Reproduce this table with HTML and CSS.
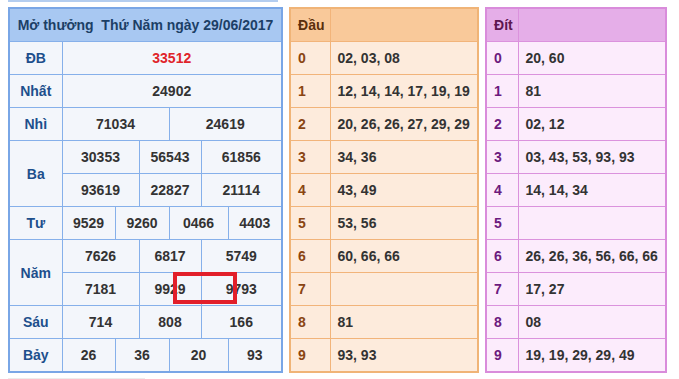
FILE: index.html
```html
<!DOCTYPE html>
<html lang="vi">
<head>
<meta charset="utf-8">
<title>Kết quả xổ số</title>
<link rel="stylesheet" href="styles.css">
</head>
<body>
<div class="prev"></div>
<div class="row">
  <div class="kq-wrap">
    <table class="kq">
      <colgroup>
        <col class="c-label"><col class="c1"><col class="c2"><col class="c3"><col class="c4"><col class="c5"><col class="c6">
      </colgroup>
      <tr class="head"><th colspan="7">Mở thưởng&nbsp; Thứ Năm ngày&nbsp;29/06/2017</th></tr>
      <tr><td class="lbl">ĐB</td><td colspan="6" class="db">33512</td></tr>
      <tr><td class="lbl">Nhất</td><td colspan="6">24902</td></tr>
      <tr><td class="lbl">Nhì</td><td colspan="3">71034</td><td colspan="3">24619</td></tr>
      <tr><td class="lbl" rowspan="2">Ba</td><td colspan="2">30353</td><td colspan="2">56543</td><td colspan="2">61856</td></tr>
      <tr><td colspan="2">93619</td><td colspan="2">22827</td><td colspan="2">21114</td></tr>
      <tr><td class="lbl">Tư</td><td>9529</td><td colspan="2">9260</td><td colspan="2">0466</td><td>4403</td></tr>
      <tr><td class="lbl" rowspan="2">Năm</td><td colspan="2">7626</td><td colspan="2">6817</td><td colspan="2">5749</td></tr>
      <tr><td colspan="2">7181</td><td colspan="2">9929</td><td colspan="2">9793</td></tr>
      <tr><td class="lbl">Sáu</td><td colspan="2">714</td><td colspan="2">808</td><td colspan="2">166</td></tr>
      <tr><td class="lbl">Bảy</td><td>26</td><td colspan="2">36</td><td colspan="2">20</td><td>93</td></tr>
    </table>
    <div class="mark"></div>
  </div>

  <table class="lt dau">
    <colgroup><col class="k"><col></colgroup>
    <tr class="head"><th>Đầu</th><th></th></tr>
    <tr><td class="d">0</td><td>02, 03, 08</td></tr>
    <tr><td class="d">1</td><td>12, 14, 14, 17, 19, 19</td></tr>
    <tr><td class="d">2</td><td>20, 26, 26, 27, 29, 29</td></tr>
    <tr><td class="d">3</td><td>34, 36</td></tr>
    <tr><td class="d">4</td><td>43, 49</td></tr>
    <tr><td class="d">5</td><td>53, 56</td></tr>
    <tr><td class="d">6</td><td>60, 66, 66</td></tr>
    <tr><td class="d">7</td><td></td></tr>
    <tr><td class="d">8</td><td>81</td></tr>
    <tr><td class="d">9</td><td>93, 93</td></tr>
  </table>

  <table class="lt dit">
    <colgroup><col class="k"><col></colgroup>
    <tr class="head"><th>Đít</th><th></th></tr>
    <tr><td class="d">0</td><td>20, 60</td></tr>
    <tr><td class="d">1</td><td>81</td></tr>
    <tr><td class="d">2</td><td>02, 12</td></tr>
    <tr><td class="d">3</td><td>03, 43, 53, 93, 93</td></tr>
    <tr><td class="d">4</td><td>14, 14, 34</td></tr>
    <tr><td class="d">5</td><td></td></tr>
    <tr><td class="d">6</td><td>26, 26, 36, 56, 66, 66</td></tr>
    <tr><td class="d">7</td><td>17, 27</td></tr>
    <tr><td class="d">8</td><td>08</td></tr>
    <tr><td class="d">9</td><td>19, 19, 29, 29, 49</td></tr>
  </table>
</div>
<div class="next"></div>
</body>
</html>
```

FILE: styles.css
```css
html, body {
  margin: 0;
  padding: 0;
  background: #ffffff;
}
body {
  font-family: "Liberation Sans", Arial, sans-serif;
  font-size: 14px;
  font-weight: bold;
  color: #333333;
  overflow: hidden;
}
.prev {
  height: 2px;
  width: 270px;
  margin-left: 8px;
  background: #b3cdf0;
}
.row {
  display: flex;
  align-items: flex-start;
  gap: 6px;
  margin: 5px 0 0 8px;
}
.kq-wrap {
  position: relative;
}
table {
  border-collapse: collapse;
  table-layout: fixed;
}
td, th {
  height: 32px;
  padding: 0;
  font-weight: bold;
  white-space: nowrap;
}
tr {
  height: 33px;
}

/* Left results table */
.kq {
  width: 273px;
  border: 2px solid #79a6e6;
  background: #f3f6fb;
}
.kq td, .kq th {
  border: 1px solid #86b0ea;
  text-align: center;
}
.kq .c-label { width: 53px; }
.kq .c1 { width: 53px; }
.kq .c2 { width: 24px; }
.kq .c3 { width: 30px; }
.kq .c4 { width: 32px; }
.kq .c5 { width: 27px; }
.kq .c6 { width: 54px; }
.kq .head th {
  background: #a8c8f2;
  color: #1c3f66;
}
.kq .lbl {
  color: #1d4f8c;
}
.kq .db {
  color: #e0242a;
}
.mark {
  position: absolute;
  left: 165px;
  top: 265px;
  width: 56px;
  height: 24px;
  border: 4px solid #e21f2a;
}

/* Head / tail tables */
.lt td, .lt th {
  text-align: left;
  padding-left: 7px;
}
.dau {
  width: 190px;
  border: 2px solid #f0b477;
  background: #fdebdc;
}
.dau td, .dau th {
  border: 1px solid #f2b47a;
}
.dau .k { width: 40px; }
.dau .head th {
  background: #f9c99a;
  color: #5b2f0c;
}
.dau .d {
  color: #8a4512;
}
.dit {
  width: 182px;
  border: 2px solid #d98cdb;
  background: #fcecfc;
}
.dit td, .dit th {
  border: 1px solid #db92dd;
}
.dit .k { width: 32px; }
.dit .head th {
  background: #e5aee8;
  color: #5c1650;
}
.dit .d {
  color: #6c1a7e;
}
.next {
  height: 3px;
  width: 137px;
  margin: 5px 0 0 8px;
  background: #ececec;
}
```
